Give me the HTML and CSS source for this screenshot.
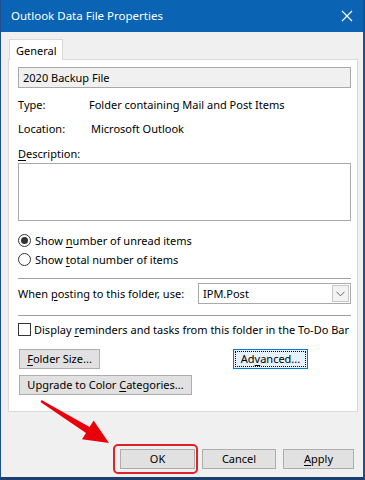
FILE: index.html
```html
<!DOCTYPE html>
<html lang="en">
<head>
    <meta charset="UTF-8">
    <meta name="viewport" content="width=device-width, initial-scale=1.0">
    <title>Outlook Data File Properties</title>
    <link rel="stylesheet" href="styles.css">
</head>
<body>
    <div class="window">
        <div class="titlebar">
            <span class="title">Outlook Data File Properties</span>
            <svg class="close" width="12" height="12" viewBox="0 0 12 12">
                <path d="M1 1 L11 11 M11 1 L1 11" stroke="#fff" stroke-width="1.2" fill="none"/>
            </svg>
        </div>

        <div class="content">
            <div class="tabs">
                <div class="tab">General</div>
            </div>
            <div class="panel">
                <div class="field name-field">2020 Backup File</div>

                <div class="props">
                    <span>Type:</span>
                    <span>Folder containing Mail and Post Items</span>
                    <span>Location:</span>
                    <span class="loc">Microsoft Outlook</span>
                </div>

                <div class="desc-label"><u>D</u>escription:</div>
                <div class="field textarea"></div>

                <div class="option first">
                    <span class="radio checked"></span>
                    <span>Show <u>n</u>umber of unread items</span>
                </div>
                <div class="option">
                    <span class="radio"></span>
                    <span>Show <u>t</u>otal number of items</span>
                </div>

                <div class="sep"></div>

                <div class="posting">
                    <span>When <u>p</u>osting to this folder, use:</span>
                    <div class="field combo">
                        <span>IPM.Post</span>
                        <span class="drop">
                            <svg width="9" height="6" viewBox="0 0 9 6">
                                <path d="M0.5 0.8 L4.5 4.8 L8.5 0.8" stroke="#666" stroke-width="1" fill="none"/>
                            </svg>
                        </span>
                    </div>
                </div>

                <div class="sep sep2"></div>

                <div class="check-row">
                    <span class="checkbox"></span>
                    <span>Display <u>r</u>eminders and tasks from this folder in the To-Do Bar</span>
                </div>

                <div class="btn-grid">
                    <button class="btn folder-size"><u>F</u>older Size...</button>
                    <button class="btn advanced"><span class="focus">Ad<u>v</u>anced...</span></button>
                    <button class="btn upgrade">Upgrade to Color <u>C</u>ategories...</button>
                </div>
            </div>

            <div class="footer">
                <button class="btn dlg ok">OK</button>
                <button class="btn dlg cancel">Cancel</button>
                <button class="btn dlg apply"><u>A</u>pply</button>
            </div>
        </div>

        <!-- annotation arrow pointing at OK -->
        <svg class="arrow" width="365" height="480" viewBox="0 0 365 480">
            <polygon points="40.5,400.1 88.6,426.9 92.6,420.6 108,443 81,439.2 85,432.9 39.5,401.9" fill="#e8000b"/>
        </svg>
    </div>
</body>
</html>
```

FILE: styles.css
```css
body {
    margin: 0;
    font-family: "Noto Sans", "Open Sans", sans-serif;
    font-size: 11px;
    color: #000;
}
u {
    text-decoration: underline;
    text-underline-offset: 2px;
}
.window {
    position: relative;
    width: 365px;
    height: 480px;
    box-sizing: border-box;
    background-color: #f0f0f0;
    border-left: 1px solid #1d4f8c;
    border-right: 2px solid #1d4f8c;
    border-bottom: 3px solid #1b3f70;
    overflow: hidden;
    white-space: nowrap;
}
.titlebar {
    height: 32px;
    background-color: #0a64b3;
    display: flex;
    align-items: center;
    justify-content: space-between;
    padding: 0 10px 0 10px;
    color: white;
    font-size: 11.5px;
}
.title {
    margin-top: -1px;
}
.content {
    padding: 7px 5px 0 7px;
}
.tabs {
    display: flex;
    padding-left: 1px;
    margin-bottom: -1px;
    position: relative;
}
.tab {
    background-color: white;
    border: 1px solid #d9d9d9;
    border-bottom: none;
    height: 21px;
    width: 54px;
    box-sizing: border-box;
    padding-left: 6px;
    line-height: 21px;
}
.panel {
    background-color: white;
    border: 1px solid #d9d9d9;
    height: 353px;
    box-sizing: border-box;
    padding: 7px 6px 0 9px;
}
.field {
    border: 1px solid #a9a9a9;
    box-sizing: border-box;
}
.name-field {
    background-color: #f0f0f0;
    height: 21px;
    line-height: 19px;
    padding-left: 4px;
}
.props {
    display: grid;
    grid-template-columns: 71px 1fr;
    row-gap: 8px;
    line-height: 16px;
    margin-top: 9px;
}
.props .loc {
    padding-left: 2px;
}
.desc-label {
    line-height: 16px;
    margin-top: 9px;
}
.textarea {
    height: 58px;
    margin-top: 1px;
    background-color: white;
}
.option {
    display: flex;
    align-items: center;
    height: 16px;
    margin-top: 3px;
    gap: 4px;
}
.option.first {
    margin-top: 11px;
}
.radio {
    width: 13px;
    height: 13px;
    box-sizing: border-box;
    border: 1px solid #333;
    border-radius: 50%;
    display: flex;
    align-items: center;
    justify-content: center;
}
.radio.checked::after {
    content: "";
    width: 7px;
    height: 7px;
    border-radius: 50%;
    background-color: #333;
}
.sep {
    height: 1px;
    background-color: #a0a0a0;
    margin-top: 11px;
}
.posting {
    display: grid;
    grid-template-columns: 180px 1fr;
    align-items: center;
    margin-top: 4px;
}
.combo {
    height: 21px;
    display: flex;
    align-items: center;
    justify-content: space-between;
    padding-left: 4px;
    padding-right: 1px;
}
.drop {
    width: 17px;
    height: 17px;
    box-sizing: border-box;
    border: 1px solid #c8c8c8;
    background-color: #f2f2f2;
    display: flex;
    align-items: center;
    justify-content: center;
}
.sep2 {
    margin-top: 11px;
}
.check-row {
    display: flex;
    align-items: center;
    height: 16px;
    margin-top: 5px;
    gap: 3px;
}
.checkbox {
    width: 13px;
    height: 13px;
    box-sizing: border-box;
    border: 1px solid #333;
}
.btn-grid {
    display: grid;
    grid-template-columns: 215px auto;
    row-gap: 6px;
    margin-top: 12px;
    justify-items: start;
}
.btn {
    font-family: inherit;
    font-size: 11px;
    color: #000;
    background-color: #e1e1e1;
    border: 1px solid #adadad;
    height: 20px;
    padding: 0;
    line-height: 16px;
    white-space: nowrap;
    cursor: pointer;
}
.folder-size {
    margin-left: 1px;
    width: 81px;
}
.advanced {
    width: 75px;
    border-color: #0078d7;
    background-color: #e5f1fb;
    padding: 1px;
}
.advanced .focus {
    display: block;
    border: 1px dotted #000;
    height: 16px;
    box-sizing: border-box;
    line-height: 14px;
}
.upgrade {
    grid-column: 1 / 3;
    margin-left: 1px;
    width: 173px;
}
.footer {
    display: flex;
    justify-content: flex-end;
    gap: 7px;
    margin-top: 37px;
    padding-right: 4px;
}
.ok {
    width: 75px;
}
.cancel {
    width: 74px;
}
.apply {
    width: 71px;
}
.ok {
    position: relative;
}
.ok::after {
    content: "";
    position: absolute;
    top: -6px;
    left: -8px;
    right: -4px;
    bottom: -6px;
    border: 2px solid #e0202a;
    border-radius: 5px;
}
.arrow {
    position: absolute;
    top: 0;
    left: 0;
    pointer-events: none;
}
```
